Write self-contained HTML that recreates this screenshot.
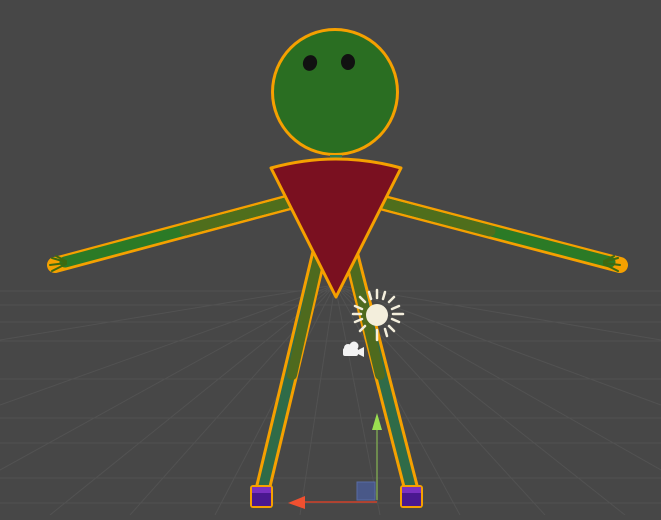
<!DOCTYPE html><html><head><style>html,body{margin:0;padding:0;background:#474747;overflow:hidden}</style></head><body>
<svg width="661" height="515" viewBox="0 0 661 515" xmlns="http://www.w3.org/2000/svg">
<rect width="661" height="515" fill="#474747"/>
<g stroke="#525252" stroke-width="1" fill="none">
<path d="M0 291H661M0 305H661M0 322H661M0 341H661M0 379H661M0 418H661M0 443H661M0 478H661M0 503H661"/>
<path d="M335 285L0 405M335 285L0 470M335 285L50 515M335 285L130 515M335 285L215 515M335 285L300 515M335 285L380 515M335 285L460 515M335 285L545 515M335 285L625 515M335 285L661 470M335 285L661 405M335 285L0 340M335 285L661 340"/>
</g>
<g stroke-linecap="round">
<line x1="290" y1="202" x2="55" y2="265" stroke="#f5a000" stroke-width="16"/>
<line x1="380" y1="202" x2="620" y2="265" stroke="#f5a000" stroke-width="16"/>
<line x1="290" y1="202" x2="65" y2="262" stroke="#2b7a26" stroke-width="11"/>
<line x1="290" y1="202" x2="185" y2="230" stroke="#4f6e1c" stroke-width="11"/>
<line x1="380" y1="202" x2="610" y2="262" stroke="#2b7a26" stroke-width="11"/>
<line x1="380" y1="202" x2="490" y2="231" stroke="#4f6e1c" stroke-width="11"/>
<g stroke="#3d6a10" stroke-width="2">
<path d="M66 262L52 258M66 263L50 265M66 264L52 271M66 261L56 256M604 262L618 258M604 263L620 265M604 264L618 271M604 261L614 256"/>
</g>
<line x1="320" y1="250" x2="262" y2="492" stroke="#f5a000" stroke-width="16"/>
<line x1="350" y1="250" x2="412" y2="492" stroke="#f5a000" stroke-width="16"/>
<line x1="320" y1="250" x2="262" y2="492" stroke="#2f6b48" stroke-width="10"/>
<line x1="350" y1="250" x2="412" y2="492" stroke="#2f6b48" stroke-width="10"/>
<line x1="320" y1="250" x2="292" y2="375" stroke="#4e6a1e" stroke-width="10"/>
<line x1="350" y1="250" x2="380" y2="375" stroke="#4e6a1e" stroke-width="10"/>
</g>
<rect x="250" y="485" width="23" height="23" rx="3" fill="#f5a000"/>
<rect x="252" y="487" width="19" height="19" fill="#4a1890"/>
<rect x="252" y="487" width="19" height="6" fill="#7a30c0"/>
<rect x="400" y="485" width="23" height="23" rx="3" fill="#f5a000"/>
<rect x="402" y="487" width="19" height="19" fill="#4a1890"/>
<rect x="402" y="487" width="19" height="6" fill="#7a30c0"/>
<circle cx="335" cy="92" r="64" fill="#f5a000"/>
<circle cx="335" cy="92" r="61" fill="#2a6e22"/>
<ellipse cx="310" cy="63" rx="7" ry="8" fill="#111" transform="rotate(20 310 63)"/>
<ellipse cx="348" cy="62" rx="7" ry="8" fill="#111"/>
<rect x="330" y="155" width="12" height="8" fill="#2f7a50"/>
<path d="M271 168Q336 150 401 168L336 297Z" fill="#7a1020" stroke="#f5a000" stroke-width="3" stroke-linejoin="round"/>
<g stroke="#f3eedc" stroke-width="2.5" stroke-linecap="round">
<path d="M377 290V298M377 330V340M353 314H361M393 314H403M360 297L365 302M389 326L394 331M394 297L389 302M365 326L360 331M369 292L371 299M385 329L387 336M385 292L383 299M355 306L362 309M392 319L399 322M399 306L392 309M355 322L362 319"/>
</g>
<circle cx="377" cy="315" r="11" fill="#f3eedc"/>
<g fill="#f3f3f3"><circle cx="348" cy="348" r="4"/><circle cx="354" cy="346" r="4.5"/><rect x="343" y="348" width="15" height="8" rx="2"/><path d="M358 350L364 347V357L358 354Z"/></g>
<rect x="357" y="482" width="18" height="18" fill="#4a5a90" stroke="#5a70b0" opacity="0.9"/>
<line x1="377" y1="500" x2="377" y2="425" stroke="#7aa050" stroke-width="1.5"/>
<path d="M372 430L377 413L382 430Z" fill="#9ae050"/>
<line x1="377" y1="502" x2="300" y2="502" stroke="#d04028" stroke-width="1.5"/>
<path d="M305 496L288 503L305 509Z" fill="#f05030"/>
</svg>
</body></html>
